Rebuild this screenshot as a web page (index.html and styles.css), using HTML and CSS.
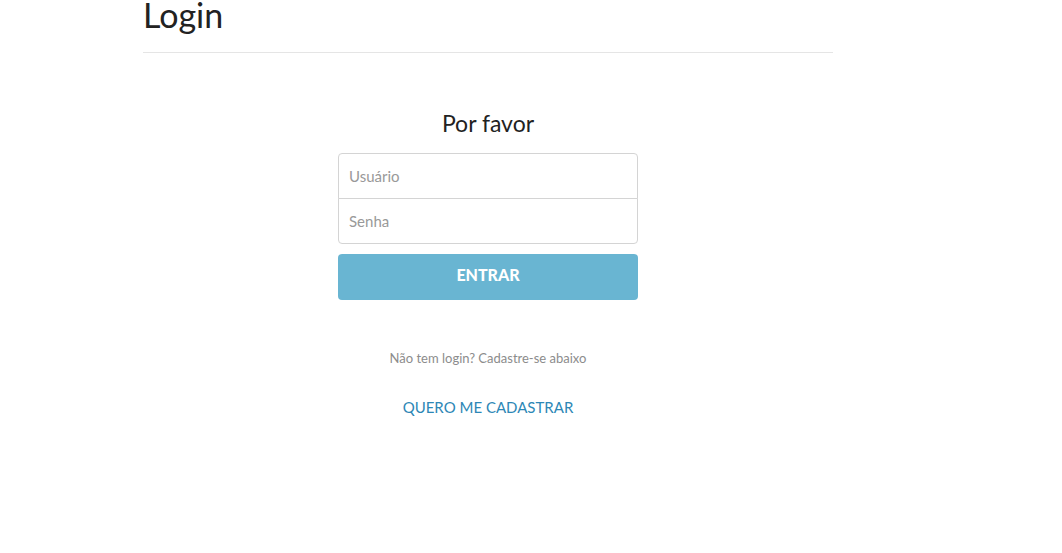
FILE: index.html
```html
<!DOCTYPE html>
<html lang="pt">
<head>
<meta charset="utf-8">
<title>Login</title>
<link rel="stylesheet" href="styles.css">
</head>
<body>
<div class="container">
  <h1 class="page-title">Login</h1>
  <div class="login-box">
    <h2 class="subtitle">Por favor</h2>
    <form class="login-form">
      <div class="inputs">
        <input class="field field-top" type="text" placeholder="Usuário">
        <input class="field field-bottom" type="password" placeholder="Senha">
      </div>
      <button class="btn-enter" type="button">ENTRAR</button>
    </form>
    <p class="hint">Não tem login? Cadastre-se abaixo</p>
    <a class="register" href="#">QUERO ME CADASTRAR</a>
  </div>
</div>
</body>
</html>
```
FILE: styles.css
```css
html, body {
  margin: 0;
  padding: 0;
  background: #fff;
}
body {
  font-family: Lato, "Open Sans", "Liberation Sans", sans-serif;
  color: #222;
}
.container {
  width: 690px;
  margin-left: 143px;
}
.page-title {
  margin: 0;
  padding-top: 0;
  font-size: 34px;
  font-weight: 400;
  line-height: 30px;
  height: 52px;
  border-bottom: 1px solid #e5e5e5;
  color: #222;
}
.login-box {
  width: 300px;
  margin: 0 auto;
  display: flex;
  flex-direction: column;
  align-items: center;
}
.subtitle {
  margin: 56px 0 0 0;
  font-size: 23px;
  font-weight: 400;
  line-height: 28px;
  color: #222;
}
.login-form {
  margin-top: 16px;
  width: 300px;
  display: flex;
  flex-direction: column;
}
.inputs {
  display: flex;
  flex-direction: column;
}
.field {
  box-sizing: border-box;
  width: 300px;
  height: 46px;
  padding: 0 10px;
  font-family: inherit;
  font-size: 15px;
  border: 1px solid #d4d4d4;
  outline: none;
  color: #555;
  background: #fff;
}
.field::placeholder {
  color: #999;
}
.field-top {
  border-radius: 4px 4px 0 0;
}
.field-bottom {
  margin-top: -1px;
  border-radius: 0 0 4px 4px;
}
.btn-enter {
  margin-top: 10px;
  height: 46px;
  padding: 0 0 5px 0;
  border: none;
  border-radius: 4px;
  background: #69b5d2;
  color: #fff;
  font-family: inherit;
  font-size: 16px;
  font-weight: 900;
  cursor: pointer;
}
.hint {
  margin: 49px 0 0 0;
  font-size: 13px;
  line-height: 18px;
  color: #8c8c8c;
}
.register {
  margin-top: 30px;
  font-size: 15px;
  line-height: 20px;
  color: #2d87b6;
  text-decoration: none;
}
```
